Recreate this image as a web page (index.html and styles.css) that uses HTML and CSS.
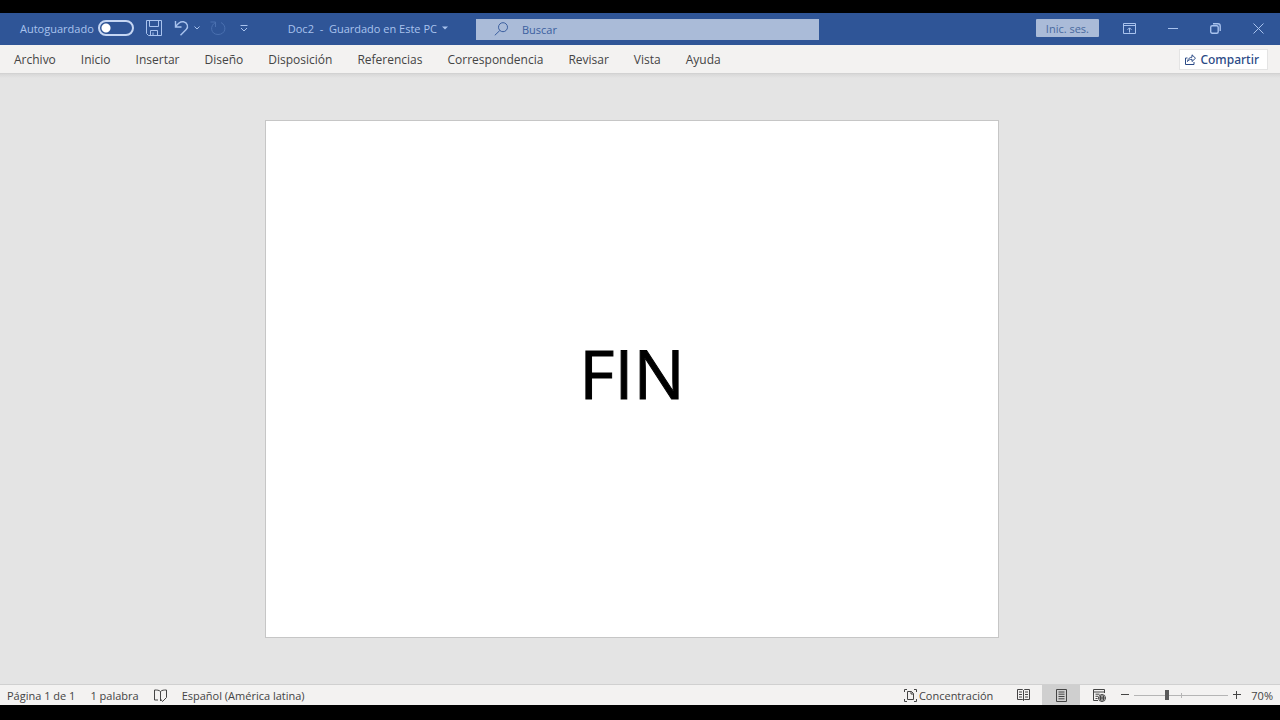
FILE: index.html
```
<!DOCTYPE html>
<html lang="es">
<head>
  <meta charset="UTF-8" />
  <meta name="viewport" content="width=device-width, initial-scale=1.0"/>
  <title>Doc2 - Word</title>
  <link rel="stylesheet" href="styles.css">
</head>
<body>
  <header class="titlebar">
    <div class="quick">
      <label class="autosave" for="autosave">Autoguardado</label>
      <input type="checkbox" class="toggle" id="autosave" />
      <button class="save" aria-label="Guardar">
        <svg width="16" height="16" viewBox="0 0 16 16"><path d="M.5 .5h15v15h-13l-2-2zM3.500 .5v6h9v-6M4.500 15.500v-5h7v5M7 15v-2.500"/></svg>
      </button>
      <button class="undo" aria-label="Deshacer">
        <svg width="15" height="16" viewBox="0 0 15 16"><path d="M1.500 1v6h6M1.500 7C4 3 7 1.300 9.500 1.800c4 .8 5.300 5 2.700 7.700L6.500 15.300"/></svg>
      </button>
      <button class="more" aria-label="Opciones de deshacer">
        <svg width="6" height="4" viewBox="0 0 6 4"><path d="M.5 .5L3 3 5.500 .5"/></svg>
      </button>
      <button class="redo" aria-label="Rehacer" disabled>
        <svg width="16" height="16" viewBox="0 0 16 16"><path d="M.5 2h5v5M5.500 2.500C-.5 5.500 .5 14.500 8 14.500s9.500-8.500 3-12"/></svg>
      </button>
      <button class="customize" aria-label="Personalizar barra">
        <svg width="8" height="7" viewBox="0 0 8 7"><path d="M.5 .5h7M1 3l3 3 3-3"/></svg>
      </button>
      <button class="doc-title">Doc2&nbsp; -&nbsp; Guardado en Este PC
        <svg width="6" height="4" viewBox="0 0 6 4"><path class="solid" d="M0 .5h6L3 3.500z"/></svg>
      </button>
    </div>

    <div class="search">
      <svg width="15" height="14" viewBox="0 0 15 14"><circle cx="9" cy="5.200" r="4.500"/><path d="M5.800 8.500L.8 13.300"/></svg>
      <input type="text" aria-label="Buscar" placeholder="Buscar" />
    </div>

    <div class="window">
      <button class="signin">Inic. ses.</button>
      <button class="win-btn" aria-label="Opciones de la cinta">
        <svg width="13" height="11" viewBox="0 0 13 11"><path d="M.5 .5h12v10h-12zM.5 2.500h12M6.500 9.500V5M4.500 6.800l2-2 2 2"/></svg>
      </button>
      <button class="win-btn" aria-label="Minimizar">
        <svg width="10" height="11" viewBox="0 0 10 11"><path d="M0 5.500h10"/></svg>
      </button>
      <button class="win-btn bold" aria-label="Restaurar">
        <svg width="11" height="11" viewBox="0 0 11 11"><rect x=".7" y="2.700" width="7.500" height="7.500" rx="1.500"/><path d="M3 .8h5c1.500 0 2.200 .8 2.200 2.200v5"/></svg>
      </button>
      <button class="win-btn" aria-label="Cerrar">
        <svg width="11" height="11" viewBox="0 0 11 11"><path d="M.5 .5l10 10M10.500 .5l-10 10"/></svg>
      </button>
    </div>
  </header>

  <nav class="ribbon">
    <button class="tab">Archivo</button>
    <button class="tab">Inicio</button>
    <button class="tab">Insertar</button>
    <button class="tab">Diseño</button>
    <button class="tab">Disposición</button>
    <button class="tab">Referencias</button>
    <button class="tab">Correspondencia</button>
    <button class="tab">Revisar</button>
    <button class="tab">Vista</button>
    <button class="tab">Ayuda</button>
    <button class="share">
      <svg width="11" height="11" viewBox="0 0 11 11"><path d="M2.500 4H.5v6.500h8.500V8M2.500 7.500C3 4.500 5 3.200 7 3.200V.8l3.500 3.400L7 7.500V5.300c-2 0-3.300 .7-4.500 2.200z"/></svg>
      Compartir
    </button>
  </nav>

  <main class="workspace">
    <article class="page">
      <p>FIN</p>
    </article>
  </main>

  <footer class="status">
    <button>Página 1 de 1</button>
    <button>1 palabra</button>
    <button aria-label="Revisión ortográfica">
      <svg width="13" height="13" viewBox="0 0 13 13"><path d="M6.500 2.500C5 1 3 1 .5 1v10H4M6.500 2.500C8 1 10 1 12.500 1v7.500M6.500 2.500V12M6.500 10l2 2.500 4-4"/></svg>
    </button>
    <button>Español (América latina)</button>

    <div class="views">
      <button class="focus">
        <svg width="13" height="13" viewBox="0 0 13 13"><path d="M.5 3V.5H3M10 .5h2.500V3M.5 10v2.500H3M10 12.500h2.500V10M3.500 2.500h4l2 2v6h-6zM7 2.500v2.500h2.500"/></svg>
        Concentración
      </button>
      <button class="view" aria-label="Modo de lectura">
        <svg width="13" height="12" viewBox="0 0 13 12"><path d="M6.500 1.500L5.500 .5h-5v10h5l1 1 1-1h5V.5h-5zM6.500 1.500v10M2 3h3M2 5.500h3M2 8h3M8 3h3M8 5.500h3M8 8h3"/></svg>
      </button>
      <button class="view active" aria-label="Diseño de impresión">
        <svg width="11" height="13" viewBox="0 0 11 13"><path d="M.5 .5h10v12H.5zM2.500 3h6M2.500 5.200h6M2.500 7.500h6M2.500 9.800h6"/></svg>
      </button>
      <button class="view" aria-label="Diseño web">
        <svg width="13" height="13" viewBox="0 0 13 13"><path d="M5 11.500H.5V.5h11V4M.5 3h11M2.500 5.200h4M2.500 7.300h2.500M2.500 9.500h2"/><circle cx="9" cy="9" r="3.500"/><path d="M9 5.500v7M5.500 9h7M7.500 6.500v5M10.500 6.500v5"/></svg>
      </button>
    </div>

    <div class="zoom">
      <button aria-label="Alejar">
        <svg width="8" height="8" viewBox="0 0 8 8"><path d="M0 3.500h8"/></svg>
      </button>
      <input type="range" min="0" max="100" value="34" aria-label="Zoom" />
      <button aria-label="Acercar">
        <svg width="8" height="8" viewBox="0 0 8 8"><path d="M0 3.500h8M3.500 0v8"/></svg>
      </button>
      <button class="percent">70%</button>
    </div>
  </footer>
</body>
</html>
```
FILE: styles.css
```
* {
  box-sizing: border-box;
}
body {
  display: flex;
  flex-direction: column;
  height: 100vh;
  margin: 0;
  padding: 13px 0 15px;
  background: #000;
  color: #444;
  font-family: 'Open Sans', 'Noto Sans', sans-serif;
  font-size: 12px;
}
button, input {
  font: inherit;
  color: inherit;
  margin: 0;
  padding: 0;
  border: 0;
  background: none;
}
button {
  display: flex;
  align-items: center;
  white-space: nowrap;
}
svg {
  flex: none;
  fill: none;
  stroke: currentColor;
}
.solid {
  fill: currentColor;
  stroke: none;
}

/* title bar */
.titlebar {
  display: grid;
  grid-template-columns: 476fr 343fr 461fr;
  align-items: center;
  height: 32px;
  background: #2f5597;
  color: #a9c3ee;
  font-size: 11px;
}
.quick {
  display: flex;
  align-items: center;
  padding: 0 0 2px 20px;
}
.toggle {
  appearance: none;
  width: 36px;
  height: 16px;
  margin-left: 4px;
  border: 2px solid #c5d6f3;
  border-radius: 8px;
  background: radial-gradient(circle at 6px 6px, #fff 4px, transparent 5px);
}
.save {
  margin: 0 12px;
}
.undo svg, .bold svg {
  stroke-width: 1.4;
}
.more {
  margin: 0 10px 0 5px;
}
.redo {
  color: #4a70b0;
}
.customize {
  margin: 0 40px 0 14px;
}
.doc-title {
  gap: 5px;
}
.search {
  display: flex;
  align-items: center;
  gap: 13px;
  height: 21px;
  padding-left: 18px;
  background: #aabbd8;
  color: #3c5f9f;
}
.search input {
  flex: 1;
  min-width: 0;
}
.search input::placeholder {
  color: #3c5f9f;
}
.window {
  display: flex;
  align-items: center;
  justify-content: flex-end;
  padding-bottom: 2px;
}
.signin {
  height: 18px;
  margin-right: 9px;
  padding: 0 10px;
  border-radius: 1px;
  background: #aabbd8;
  color: #48699f;
}
.win-btn {
  justify-content: center;
  width: 43px;
  height: 30px;
}

/* ribbon tabs */
.ribbon {
  display: flex;
  align-items: center;
  gap: 25px;
  height: 29px;
  padding: 0 12px 0 14px;
  border-bottom: 1px solid #d2d2d2;
  background: #f3f2f1;
}
.share {
  gap: 4px;
  height: 21px;
  margin-left: auto;
  padding: 0 8px 0 5px;
  border: 1px solid #e4e4e4;
  background: #fff;
  color: #2b4a86;
  font-family: 'Noto Sans', sans-serif;
  font-weight: 500;
}

/* document */
.workspace {
  flex: 1;
  min-height: 0;
  padding: 46px 16px 0 0;
  background: linear-gradient(#d8d8d8, #e4e4e4 4px);
}
.page {
  display: flex;
  align-items: center;
  justify-content: center;
  width: 734px;
  max-width: 100%;
  aspect-ratio: 734 / 518;
  margin: 0 auto;
  padding-bottom: 12px;
  border: 1px solid #c6c6c6;
  background: #fff;
  color: #000;
}
.page p {
  margin: 0;
  font-size: 68px;
  line-height: 80px;
  -webkit-text-stroke: 1px #000;
}

/* status bar */
.status {
  display: flex;
  align-items: center;
  gap: 15px;
  height: 21px;
  padding: 0 7px;
  border-top: 1px solid #d0d0d0;
  background: #f3f2f1;
  font-size: 11px;
}
.views {
  display: flex;
  align-items: center;
  align-self: stretch;
  margin-left: auto;
}
.focus {
  gap: 2px;
  margin-right: 11px;
}
.view {
  justify-content: center;
  align-self: stretch;
  width: 38px;
}
.active {
  background: #cfcfcf;
}
.zoom {
  display: flex;
  align-items: center;
  gap: 5px;
  margin-left: -12px;
}
.zoom input {
  appearance: none;
  width: 94px;
  height: 11px;
  background:
    linear-gradient(#b5b5b5, #b5b5b5) center / 1px 5px no-repeat,
    linear-gradient(#b5b5b5, #b5b5b5) center / 100% 1px no-repeat;
}
.zoom input::-webkit-slider-thumb {
  appearance: none;
  width: 4px;
  height: 10px;
  background: #5a5a5a;
}
.percent {
  margin-left: 5px;
}
```
